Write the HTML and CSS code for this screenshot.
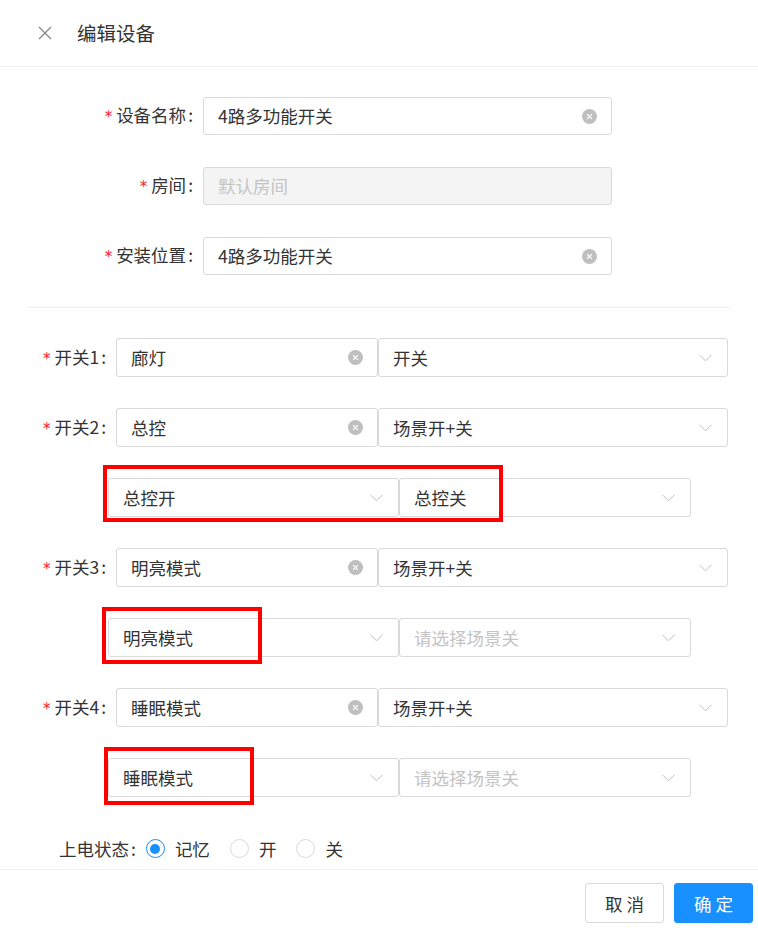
FILE: index.html
```html
<!DOCTYPE html>
<html lang="zh-CN">
<head>
  <meta charset="UTF-8" />
  <meta name="viewport" content="width=device-width, initial-scale=1.0"/>
  <title>编辑设备</title>
  <link rel="stylesheet" href="styles.css">
</head>
<body>
  <div class="dialog">
    <!-- 标题栏 -->
    <div class="dialog-header">
      <button class="close-btn">
        <svg width="14" height="14" viewBox="0 0 14 14"><path d="M1 1L13 13M13 1L1 13" stroke="#8c8c8c" stroke-width="1.4" fill="none"/></svg>
      </button>
      <span class="dialog-title">编辑设备</span>
    </div>

    <div class="dialog-body">
      <!-- 基本信息 -->
      <div class="form-basic">
        <div class="form-row">
          <label class="form-label required">设备名称</label>
          <div class="field">
            <span class="field-text">4路多功能开关</span>
            <span class="clear-icon"><svg width="15" height="15" viewBox="0 0 14 14"><circle cx="7" cy="7" r="7" fill="#bfbfbf"/><path d="M4.8 4.8L9.2 9.2M9.2 4.8L4.8 9.2" stroke="#fff" stroke-width="1.2"/></svg></span>
          </div>
        </div>
        <div class="form-row">
          <label class="form-label required">房间</label>
          <div class="field disabled">
            <span class="field-text placeholder">默认房间</span>
          </div>
        </div>
        <div class="form-row">
          <label class="form-label required">安装位置</label>
          <div class="field">
            <span class="field-text">4路多功能开关</span>
            <span class="clear-icon"><svg width="15" height="15" viewBox="0 0 14 14"><circle cx="7" cy="7" r="7" fill="#bfbfbf"/><path d="M4.8 4.8L9.2 9.2M9.2 4.8L4.8 9.2" stroke="#fff" stroke-width="1.2"/></svg></span>
          </div>
        </div>
      </div>

      <div class="divider"></div>

      <!-- 开关配置 -->
      <div class="form-switch">
        <div class="switch-row">
          <label class="form-label required">开关1</label>
          <div class="field name-field">
            <span class="field-text">廊灯</span>
            <span class="clear-icon"><svg width="15" height="15" viewBox="0 0 14 14"><circle cx="7" cy="7" r="7" fill="#bfbfbf"/><path d="M4.8 4.8L9.2 9.2M9.2 4.8L4.8 9.2" stroke="#fff" stroke-width="1.2"/></svg></span>
          </div>
          <div class="field type-field">
            <span class="field-text">开关</span>
            <span class="arrow"><svg width="13" height="8" viewBox="0 0 13 8"><path d="M0.5 0.8L6.5 6.8L12.5 0.8" stroke="#bfbfbf" stroke-width="1" fill="none"/></svg></span>
          </div>
        </div>

        <div class="switch-row">
          <label class="form-label required">开关2</label>
          <div class="field name-field">
            <span class="field-text">总控</span>
            <span class="clear-icon"><svg width="15" height="15" viewBox="0 0 14 14"><circle cx="7" cy="7" r="7" fill="#bfbfbf"/><path d="M4.8 4.8L9.2 9.2M9.2 4.8L4.8 9.2" stroke="#fff" stroke-width="1.2"/></svg></span>
          </div>
          <div class="field type-field">
            <span class="field-text">场景开+关</span>
            <span class="arrow"><svg width="13" height="8" viewBox="0 0 13 8"><path d="M0.5 0.8L6.5 6.8L12.5 0.8" stroke="#bfbfbf" stroke-width="1" fill="none"/></svg></span>
          </div>
        </div>
        <div class="scene-row">
          <div class="field scene-on">
            <span class="field-text">总控开</span>
            <span class="arrow"><svg width="13" height="8" viewBox="0 0 13 8"><path d="M0.5 0.8L6.5 6.8L12.5 0.8" stroke="#bfbfbf" stroke-width="1" fill="none"/></svg></span>
          </div>
          <div class="field scene-off">
            <span class="field-text">总控关</span>
            <span class="arrow"><svg width="13" height="8" viewBox="0 0 13 8"><path d="M0.5 0.8L6.5 6.8L12.5 0.8" stroke="#bfbfbf" stroke-width="1" fill="none"/></svg></span>
          </div>
          <div class="mark mark-wide"></div>
        </div>

        <div class="switch-row">
          <label class="form-label required">开关3</label>
          <div class="field name-field">
            <span class="field-text">明亮模式</span>
            <span class="clear-icon"><svg width="15" height="15" viewBox="0 0 14 14"><circle cx="7" cy="7" r="7" fill="#bfbfbf"/><path d="M4.8 4.8L9.2 9.2M9.2 4.8L4.8 9.2" stroke="#fff" stroke-width="1.2"/></svg></span>
          </div>
          <div class="field type-field">
            <span class="field-text">场景开+关</span>
            <span class="arrow"><svg width="13" height="8" viewBox="0 0 13 8"><path d="M0.5 0.8L6.5 6.8L12.5 0.8" stroke="#bfbfbf" stroke-width="1" fill="none"/></svg></span>
          </div>
        </div>
        <div class="scene-row">
          <div class="field scene-on">
            <span class="field-text">明亮模式</span>
            <span class="arrow"><svg width="13" height="8" viewBox="0 0 13 8"><path d="M0.5 0.8L6.5 6.8L12.5 0.8" stroke="#bfbfbf" stroke-width="1" fill="none"/></svg></span>
          </div>
          <div class="field scene-off">
            <span class="field-text placeholder">请选择场景关</span>
            <span class="arrow"><svg width="13" height="8" viewBox="0 0 13 8"><path d="M0.5 0.8L6.5 6.8L12.5 0.8" stroke="#bfbfbf" stroke-width="1" fill="none"/></svg></span>
          </div>
          <div class="mark mark-3"></div>
        </div>

        <div class="switch-row">
          <label class="form-label required">开关4</label>
          <div class="field name-field">
            <span class="field-text">睡眠模式</span>
            <span class="clear-icon"><svg width="15" height="15" viewBox="0 0 14 14"><circle cx="7" cy="7" r="7" fill="#bfbfbf"/><path d="M4.8 4.8L9.2 9.2M9.2 4.8L4.8 9.2" stroke="#fff" stroke-width="1.2"/></svg></span>
          </div>
          <div class="field type-field">
            <span class="field-text">场景开+关</span>
            <span class="arrow"><svg width="13" height="8" viewBox="0 0 13 8"><path d="M0.5 0.8L6.5 6.8L12.5 0.8" stroke="#bfbfbf" stroke-width="1" fill="none"/></svg></span>
          </div>
        </div>
        <div class="scene-row">
          <div class="field scene-on">
            <span class="field-text">睡眠模式</span>
            <span class="arrow"><svg width="13" height="8" viewBox="0 0 13 8"><path d="M0.5 0.8L6.5 6.8L12.5 0.8" stroke="#bfbfbf" stroke-width="1" fill="none"/></svg></span>
          </div>
          <div class="field scene-off">
            <span class="field-text placeholder">请选择场景关</span>
            <span class="arrow"><svg width="13" height="8" viewBox="0 0 13 8"><path d="M0.5 0.8L6.5 6.8L12.5 0.8" stroke="#bfbfbf" stroke-width="1" fill="none"/></svg></span>
          </div>
          <div class="mark mark-4"></div>
        </div>

        <!-- 上电状态 -->
        <div class="power-row">
          <span class="power-label">上电状态</span>
          <label class="radio checked"><span class="radio-dot"></span>记忆</label>
          <label class="radio"><span class="radio-dot"></span>开</label>
          <label class="radio"><span class="radio-dot"></span>关</label>
        </div>
      </div>
    </div>

    <div class="dialog-footer">
      <button class="btn">取 消</button>
      <button class="btn btn-primary">确 定</button>
    </div>
  </div>
</body>
</html>
```

FILE: styles.css
```css
body {
  margin: 0;
  background: #fff;
  font-family: "Noto Sans CJK SC", "Noto Sans", sans-serif;
  color: #333;
}
.dialog {
  width: 758px;
}
.dialog-header {
  height: 66px;
  border-bottom: 1px solid #eee;
  display: flex;
  align-items: center;
}
.close-btn {
  margin-left: 38px;
  width: 14px;
  height: 14px;
  padding: 0;
  border: none;
  background: none;
  display: flex;
  cursor: pointer;
}
.dialog-title {
  margin-left: 25px;
  font-size: 19.5px;
  line-height: 26px;
  color: #333;
}
.form-basic {
  padding-top: 30px;
}
.form-row {
  display: flex;
  align-items: center;
  height: 38px;
  margin-bottom: 32px;
}
.form-label {
  font-size: 17.5px;
  line-height: 24px;
  color: #333;
  text-align: right;
  white-space: nowrap;
}
.form-label::after {
  content: ":";
  margin-left: 2px;
}
.form-label.required::before {
  content: "*";
  color: #f5222d;
  margin-right: 4px;
  font-family: "DejaVu Sans", sans-serif;
  font-size: 15px;
}
.form-basic .form-label {
  width: 193px;
  margin-right: 10px;
}
.field {
  position: relative;
  box-sizing: border-box;
  height: 100%;
  border: 1px solid #d9d9d9;
  border-radius: 3px;
  background: #fff;
  display: flex;
  align-items: center;
  padding: 0 14px;
}
.form-basic .field {
  width: 409px;
}
.field.disabled {
  background: #f4f4f4;
}
.field-text {
  flex: 1;
  font-size: 17.5px;
  line-height: 24px;
  color: #333;
  white-space: nowrap;
}
.field-text.placeholder {
  color: #c4c4c4;
}
.clear-icon {
  display: flex;
}
.arrow {
  display: flex;
  margin-right: 1px;
}
.divider {
  margin: 0 28px;
  border-top: 1px solid #eee;
}
.form-switch {
  padding-top: 30px;
}
.switch-row {
  display: flex;
  align-items: center;
  height: 39px;
  margin-bottom: 31px;
}
.switch-row .form-label {
  width: 106px;
  margin-right: 10px;
}
.name-field {
  width: 262px;
}
.type-field {
  width: 350px;
}
.scene-row {
  position: relative;
  display: flex;
  height: 39px;
  margin-bottom: 31px;
  padding-left: 108px;
}
.scene-on {
  width: 291px;
}
.scene-off {
  width: 292px;
}
/* 红色标注框 */
.mark {
  position: absolute;
  border: 4px solid #f00;
  box-sizing: border-box;
}
.mark-wide {
  left: 103px;
  top: -13px;
  width: 400px;
  height: 57px;
}
.mark-3 {
  left: 102px;
  top: -11px;
  width: 160px;
  height: 57px;
}
.mark-4 {
  left: 104px;
  top: -11px;
  width: 150px;
  height: 58px;
}
.power-row {
  display: flex;
  align-items: center;
  height: 41px;
  padding-left: 59px;
  font-size: 17.5px;
  line-height: 24px;
}
.power-label {
  margin-right: 10px;
}
.power-label::after {
  content: ":";
  margin-left: 2px;
}
.radio {
  display: flex;
  align-items: center;
  margin-right: 20px;
  color: #333;
}
.radio-dot {
  box-sizing: border-box;
  width: 19px;
  height: 19px;
  border: 1px solid #d9d9d9;
  border-radius: 50%;
  margin-right: 10px;
  display: flex;
  align-items: center;
  justify-content: center;
}
.radio.checked .radio-dot {
  border-color: #1890ff;
}
.radio.checked .radio-dot::after {
  content: "";
  width: 10px;
  height: 10px;
  border-radius: 50%;
  background: #1890ff;
}
.dialog-footer {
  border-top: 1px solid #eee;
  padding: 13px 5px 10px 0;
  display: flex;
  justify-content: flex-end;
  gap: 10px;
}
.btn {
  width: 79px;
  height: 40px;
  border: 1px solid #d9d9d9;
  border-radius: 3px;
  background: #fff;
  color: #333;
  font-family: inherit;
  font-size: 17.5px;
  cursor: pointer;
  padding: 0;
}
.btn-primary {
  background: #1890ff;
  border-color: #1890ff;
  color: #fff;
}
```
